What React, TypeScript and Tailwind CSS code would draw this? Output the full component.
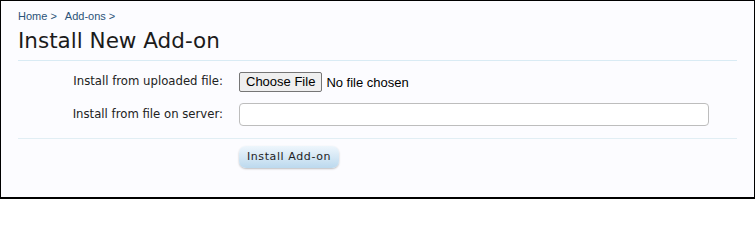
export default function App() {
  return (
    <div className="w-[755px] h-[199px] border border-black border-b-2 bg-[#fcfcff] overflow-hidden font-['DejaVu_Sans',sans-serif]">
      <div className="px-[17px] pt-[9px]">
        <nav className="flex gap-[8px] text-[11px] text-[#2b5378] font-['Liberation_Sans',sans-serif] leading-[13px]">
          <span>Home &gt;</span>
          <span>Add-ons &gt;</span>
        </nav>
        <h1 className="mt-[4px] text-[21.5px] leading-[28px] text-[#1b1b1b]">Install New Add-on</h1>
        <div className="mt-[5px] h-px bg-[#d9ebf4]" />
      </div>

      <form className="pt-[11px]">
        <div className="flex flex-col gap-[11px] text-[11.7px] text-[#222]">
          <div className="flex items-center h-[20px]">
            <label className="w-[222px] text-right">Install from uploaded file:</label>
            <div className="ml-[16px] flex items-center gap-[4px] font-['Liberation_Sans',sans-serif]">
              <button
                type="button"
                className="h-[20px] px-[6px] border border-[#767676] rounded-[2px] bg-[#efefef] text-[13px] leading-[18px] text-black"
              >
                Choose File
              </button>
              <span className="text-[13px] text-black mt-[2px]">No file chosen</span>
            </div>
          </div>
          <div className="flex items-center h-[23px]">
            <label className="w-[222px] text-right">Install from file on server:</label>
            <input
              type="text"
              className="ml-[16px] w-[470px] h-[23px] border border-[#bdbdbd] rounded-[4px] bg-white outline-none"
            />
          </div>
        </div>
        <div className="mx-[17px] mt-[12px] h-px bg-[#e1eef4]" />
        <div className="pl-[238px] pt-[4px]">
          <button
            type="button"
            className="w-[100px] h-[22px] rounded-[7px] bg-gradient-to-b from-[#eef6fc] to-[#bcd9ee] shadow-[0_1px_2px_rgba(0,0,0,0.25)] text-[11px] tracking-[0.6px] text-[#1e1e1e]"
          >
            Install Add-on
          </button>
        </div>
      </form>
    </div>
  );
}
